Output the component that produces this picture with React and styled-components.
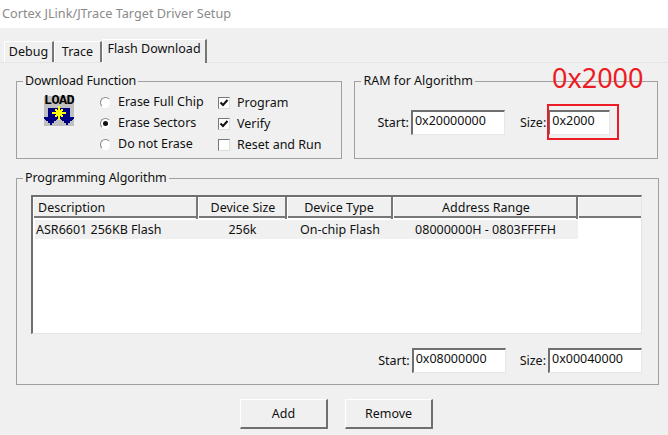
import React from "react";
import styled, { createGlobalStyle } from "styled-components";

const Global = createGlobalStyle`
  html, body { margin: 0; padding: 0; background: #f0f0f0; }
  * { box-sizing: border-box; }
`;

const Page = styled.div`
  position: relative;
  width: 668px;
  height: 435px;
  overflow: hidden;
  background: #f0f0f0;
  color: #111;
  font: 12.5px/16px "Noto Sans", "Open Sans", sans-serif;
`;

const TitleBar = styled.div`
  height: 28px;
  background: #fff;
  padding: 4px 0 0 2px;
  color: #8a8a8a;
  font-size: 12.7px;
  line-height: 18px;
`;

const TabStrip = styled.div`
  display: flex;
  align-items: flex-end;
  height: 34px;
  padding-left: 4px;
`;

const Tab = styled.div`
  height: ${p => (p.$active ? 24 : 21)}px;
  width: ${p => p.$w}px;
  margin-bottom: ${p => (p.$active ? -1 : 0)}px;
  position: relative;
  border-top: 1px solid #fff;
  border-left: 1px solid #fff;
  border-right: 2px solid #777;
  background: #f0f0f0;
  text-align: center;
  line-height: ${p => (p.$active ? 18 : 20)}px;
`;

const Panel = styled.div`
  border-top: 1px solid #e4e4e4;
  padding: 10px 10px 0 16px;
`;

const TopRow = styled.div`
  display: flex;
  gap: 12px;
`;

const Group = styled.fieldset`
  margin: ${p => p.$mt || 0}px 0 0;
  padding: 0;
  width: ${p => p.$w}px;
  height: ${p => p.$h}px;
  border: 1px solid #a0a0a0;
  min-width: 0;
`;

const Legend = styled.legend`
  margin-left: 6px;
  padding: 0 2px 0 2px;
  line-height: 16px;
  letter-spacing: ${p => p.$ls || 0}px;
`;

const DownloadBody = styled.div`
  display: flex;
  padding: 5px 0 0 27px;
`;

const LoadIcon = styled.div`
  display: flex;
  flex-direction: column;
  width: 30px;
  height: 30px;
  margin: 2px 26px 0 0;
  flex: none;
  background: #c0c0c0;
`;

const LoadCaption = styled.span`
  display: block;
  height: 10px;
  color: #000;
  font: 700 13.5px/10px "Liberation Mono", monospace;
  letter-spacing: -0.6px;
  white-space: nowrap;
`;

const LoadArt = styled.svg`
  display: block;
  width: 30px;
  height: 20px;
`;

const OptionCol = styled.div`
  display: flex;
  flex-direction: column;
  gap: 5px;
  width: ${p => p.$w}px;
  padding-top: ${p => p.$pt || 0}px;
`;

const Option = styled.label`
  display: flex;
  align-items: center;
  height: 16px;
  white-space: nowrap;
`;

const Radio = styled.span`
  width: 11px;
  height: 11px;
  margin-right: 7px;
  border-radius: 50%;
  border: 1px solid;
  border-color: #8a8a8a #eee #fff #8a8a8a;
  background: #fff;
  display: flex;
  align-items: center;
  justify-content: center;
  &::after {
    content: "";
    width: 5px;
    height: 5px;
    border-radius: 50%;
    background: ${p => (p.$on ? "#111" : "transparent")};
  }
`;

const Check = styled.span`
  width: 12px;
  height: 12px;
  margin-right: 7px;
  border: 1px solid;
  border-color: #777 #ddd #ddd #777;
  background: #fff;
  display: flex;
  svg { display: block; }
`;

const RamBody = styled.div`
  display: flex;
  align-items: center;
  padding: 21px 0 0 22px;
`;

const FieldLabel = styled.span`
  margin-right: ${p => p.$mr || 2}px;
  margin-left: ${p => p.$ml || 0}px;
`;

const Input = styled.div`
  width: ${p => p.$w}px;
  height: 25px;
  background: #fff;
  border: 1px solid;
  border-color: #6f6f6f #e6e6e6 #e6e6e6 #6f6f6f;
  border-width: 2px 1px 1px 2px;
  padding: 1px 0 0 2px;
  line-height: 16px;
  color: #111;
`;

const SizeHighlight = styled.div`
  position: absolute;
  left: 547px;
  top: 104px;
  width: 72px;
  height: 36px;
  border: 2px solid #ed1c24;
  pointer-events: none;
`;

const SizeNote = styled.div`
  position: absolute;
  left: 552px;
  top: 59px;
  color: #ed1c24;
  font-size: 27px;
  line-height: 38px;
`;

const AlgoBody = styled.div`
  padding: 9px 16px 0 14px;
`;

const List = styled.div`
  height: 139px;
  background: #fff;
  border: 1px solid;
  border-width: 2px 1px 1px 2px;
  border-color: #6f6f6f #e4e4e4 #e4e4e4 #6f6f6f;
`;

const HeaderRow = styled.div`
  display: grid;
  grid-template-columns: 165px 89px 106px 185px 1fr;
  height: 21px;
  background: #f0f0f0;
  border-bottom: 2px solid #777;
  margin-bottom: 2px;
`;

const HeaderCell = styled.div`
  border-right: 2px solid #777;
  box-shadow: inset 1px 1px 0 #fff;
  padding-left: ${p => p.$pl || 0}px;
  text-align: ${p => (p.$left ? "left" : "center")};
  line-height: 22px;
  &:last-child { border-right: 0; }
`;

const DataRow = styled.div`
  display: grid;
  grid-template-columns: 163px 89px 106px 185px;
  width: 543px;
  height: 19px;
  margin-left: 2px;
  background: #f0f0f0;
  line-height: 19px;
`;

const DataCell = styled.div`
  text-align: ${p => (p.$left ? "left" : "center")};
  padding-left: ${p => (p.$left ? 1 : 0)}px;
  white-space: nowrap;
`;

const FlashFields = styled.div`
  display: flex;
  justify-content: flex-end;
  align-items: center;
  margin-top: 14px;
`;

const Buttons = styled.div`
  display: flex;
  gap: 17px;
  padding: 14px 0 0 224px;
`;

const Button = styled.button`
  width: 88px;
  height: 30px;
  padding: 0;
  background: #f0f0f0;
  font: inherit;
  color: #111;
  border: 1px solid;
  border-width: 1px 2px 2px 1px;
  border-color: #fff #6f6f6f #6f6f6f #fff;
`;

const CheckMark = () => (
  <svg width="10" height="10" viewBox="0 0 10 10">
    <path d="M1.5 4.5 L4 7 L8.5 2" fill="none" stroke="#111" strokeWidth="2" />
  </svg>
);

const arrowHead = "h14v2h-1v1h-1v1h-2v2h-2v2h-2v-2h-2v-2h-2v-1h-1v-1h-1z";

const Load = () => (
  <LoadIcon>
    <LoadCaption>LOAD</LoadCaption>
    <LoadArt viewBox="0 0 30 20" shapeRendering="crispEdges">
      <path d="M4 2h22v11h-22z" fill="#000080" />
      <path d={`M0 11${arrowHead}`} fill="#000080" />
      <path d={`M16 11${arrowHead}`} fill="#000080" />
      <path d="M14 0h2v4h1v-1h2v2h-1v1h4v2h-4v1h1v2h-2v-1h-1v4h-2v-4h-1v1h-2v-2h1v-1h-4v-2h4v-1h-1v-2h2v1h1z" fill="#ffff00" />
    </LoadArt>
  </LoadIcon>
);

export default function App() {
  return (
    <Page>
      <Global />
      <TitleBar>Cortex JLink/JTrace Target Driver Setup</TitleBar>
      <TabStrip>
        <Tab $w={50}>Debug</Tab>
        <Tab $w={48}>Trace</Tab>
        <Tab $w={105} $active>Flash Download</Tab>
      </TabStrip>
      <Panel>
        <TopRow>
          <Group $w={327} $h={86}>
            <Legend $ls={-0.15}>Download Function</Legend>
            <DownloadBody>
              <Load />
              <OptionCol $w={118}>
                <Option><Radio />Erase Full Chip</Option>
                <Option><Radio $on />Erase Sectors</Option>
                <Option><Radio />Do not Erase</Option>
              </OptionCol>
              <OptionCol $w={110} $pt={1}>
                <Option><Check><CheckMark /></Check>Program</Option>
                <Option><Check><CheckMark /></Check>Verify</Option>
                <Option><Check />Reset and Run</Option>
              </OptionCol>
            </DownloadBody>
          </Group>
          <Group $w={304} $h={86}>
            <Legend>RAM for Algorithm</Legend>
            <RamBody>
              <FieldLabel>Start:</FieldLabel>
              <Input $w={94}>0x20000000</Input>
              <FieldLabel $ml={15}>Size:</FieldLabel>
              <Input $w={62}>0x2000</Input>
            </RamBody>
          </Group>
        </TopRow>
        <Group $w={643} $h={215} $mt={11}>
          <Legend $ls={-0.1}>Programming Algorithm</Legend>
          <AlgoBody>
            <List>
              <HeaderRow>
                <HeaderCell $left $pl={5}>Description</HeaderCell>
                <HeaderCell $pl={3}>Device Size</HeaderCell>
                <HeaderCell>Device Type</HeaderCell>
                <HeaderCell $pl={3}>Address Range</HeaderCell>
                <HeaderCell />
              </HeaderRow>
              <DataRow>
                <DataCell $left>ASR6601 256KB Flash</DataCell>
                <DataCell>256k</DataCell>
                <DataCell>On-chip Flash</DataCell>
                <DataCell>08000000H - 0803FFFFH</DataCell>
              </DataRow>
            </List>
            <FlashFields>
              <FieldLabel>Start:</FieldLabel>
              <Input $w={94}>0x08000000</Input>
              <FieldLabel $ml={14}>Size:</FieldLabel>
              <Input $w={94}>0x00040000</Input>
            </FlashFields>
          </AlgoBody>
        </Group>
        <Buttons>
          <Button>Add</Button>
          <Button>Remove</Button>
        </Buttons>
      </Panel>
      <SizeNote>0x2000</SizeNote>
      <SizeHighlight />
    </Page>
  );
}
